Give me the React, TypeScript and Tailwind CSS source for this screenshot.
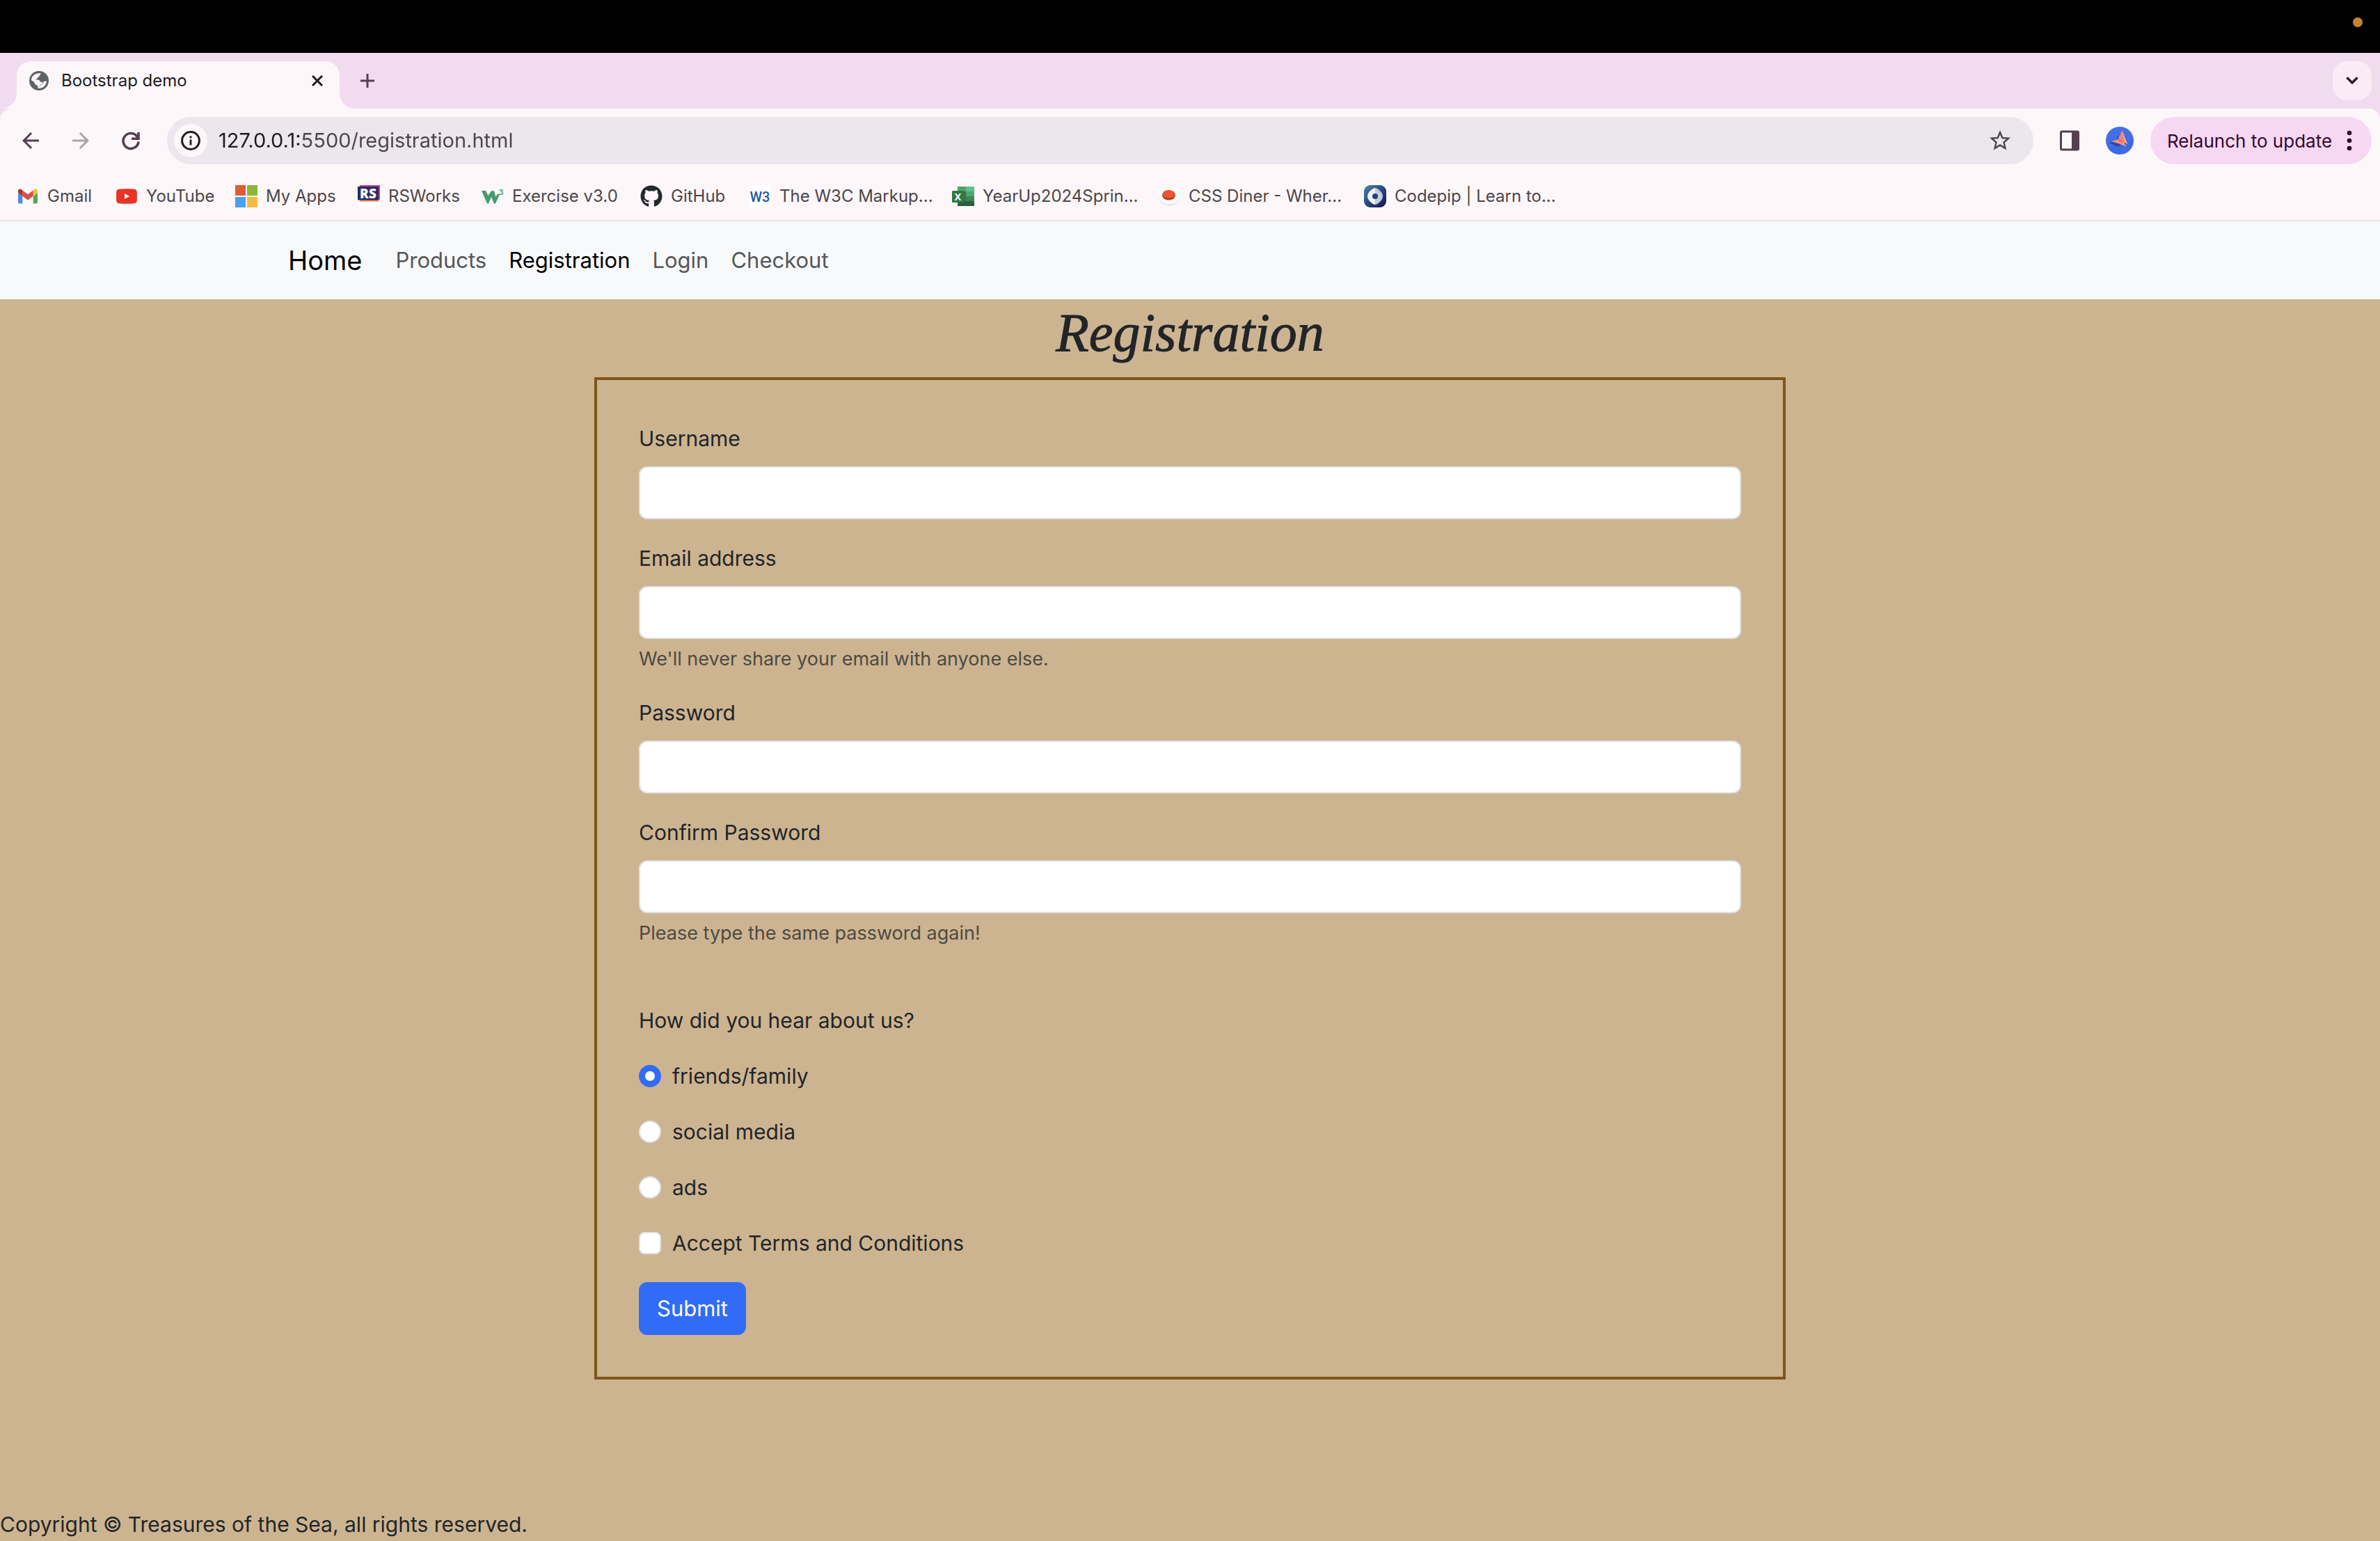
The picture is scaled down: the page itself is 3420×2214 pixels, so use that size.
import type { ReactNode } from "react";
import { FaGithub } from "react-icons/fa";
import { MdArrowBack, MdArrowForward, MdStarOutline } from "react-icons/md";

function GlobeIcon() {
  return (
    <svg viewBox="0 0 84 84" className="size-7 shrink-0" aria-hidden="true">
      <circle cx="42" cy="42" r="42" fill="#5f6368" />
      <path d="M9 40C9 23 24 9 46 9.5C48 9.5 50 11 50 13C49 17 43 17 43 22C43 28 36 26 35 31C35 36 30 35 28 38H40C46 39 46 46 50 47C57 47 58 50 57 54C56 58 46 57 46 63V74C43 75 38 74 37 73V66C37 60 26 62 24 54C22 45 14 44 9 40Z" fill="#fdf7fa" />
      <path d="M46 74.5C62 73 75 59 74.5 42C70 46 66 43 62 46C58 50 60 54 57 56C54 60 46 58 46 65Z" fill="#fdf7fa" />
    </svg>
  );
}

function ReloadIcon() {
  return (
    <svg viewBox="0 0 36 36" className="size-9" fill="none" stroke="#54404f" strokeWidth="3.6" aria-hidden="true">
      <path d="M29 19.5A11 11 0 1 1 26.5 11.5L28.5 14.5" />
      <path d="M29 6V15.2H19" />
    </svg>
  );
}

function InfoIcon() {
  return (
    <svg viewBox="0 0 28 28" className="size-7" fill="none" stroke="#1f1a1e" aria-hidden="true">
      <circle cx="14" cy="14" r="12.4" strokeWidth="3" />
      <path d="M14 12.6V20.5M14 7.6V10.4" strokeWidth="2.8" />
    </svg>
  );
}

function SidePanelIcon() {
  return (
    <svg viewBox="0 0 28 30" className="h-[30px] w-7" aria-hidden="true">
      <rect x="1.5" y="2" width="25" height="26" rx="1.5" fill="#fdf7fa" stroke="#54404f" strokeWidth="3" />
      <rect x="17" y="1" width="10" height="28" fill="#54404f" />
    </svg>
  );
}

function AvatarIcon() {
  return (
    <svg viewBox="0 0 120 120" className="size-10" aria-hidden="true">
      <circle cx="60" cy="60" r="60" fill="#4170e6" />
      <path d="M10 92L118 50A60 60 0 0 1 20 104Z" fill="#3d6ae2" />
      <path d="M14 70L48 58L52 36L66 92L72 104L60 80L54 88Z" fill="#2f4aa8" />
      <path d="M70 16L52 58L78 72L88 62Z" fill="#f08478" />
      <path d="M70 16L88 60L95 76L80 66Z" fill="#f7a193" />
      <path d="M24 64L56 54L80 70L88 86L60 74Z" fill="#f59084" />
      <path d="M52 58L62 54L72 68Z" fill="#e0604f" />
    </svg>
  );
}

function GmailIcon() {
  return (
    <svg viewBox="52 42 88 66" className="h-[22px] w-7" aria-hidden="true">
      <path fill="#5487f0" d="M58 108h14V74L52 59v43c0 3.3 2.7 6 6 6" />
      <path fill="#5aa85c" d="M120 108h14c3.3 0 6-2.7 6-6V59l-20 15" />
      <path fill="#f4bf42" d="M120 48v26l20-15v-8c0-7.4-8.5-11.6-14.4-7.2" />
      <path fill="#d9503f" d="M72 74V48l24 18 24-18v26L96 92" />
      <path fill="#b5312a" d="M52 51v8l20 15V48l-5.6-4.2c-5.9-4.4-14.4-.2-14.4 7.2" />
    </svg>
  );
}

function YouTubeIcon() {
  return (
    <svg viewBox="0 0 30 22" className="h-[22px] w-[30px]" aria-hidden="true">
      <path d="M4 .8C10 0 20 0 26 .8C28.4 1.1 29.6 2.4 29.8 5C30 9 30 13 29.8 17C29.6 19.6 28.4 20.9 26 21.2C20 22 10 22 4 21.2C1.6 20.9 .4 19.6 .2 17C0 13 0 9 .2 5C.4 2.4 1.6 1.1 4 .8Z" fill="#e93323" />
      <path d="M12 7V15L19 11Z" fill="#fff" />
    </svg>
  );
}

function WindowsIcon() {
  return (
    <svg viewBox="0 0 32 32" className="size-8" aria-hidden="true">
      <path fill="#dd5d35" d="M0 0h15v15H0z" />
      <path fill="#8bb736" d="M17 0h15v15H17z" />
      <path fill="#4ba1ea" d="M0 17h15v15H0z" />
      <path fill="#f5bb42" d="M17 17h15v15H17z" />
    </svg>
  );
}

function RSIcon() {
  return (
    <svg viewBox="0 0 32 32" className="size-8" aria-hidden="true">
      <path fill="#fff" d="M0 20h32v12H0z" />
      <path fill="#c4419a" d="M3 0h29v21H3z" />
      <path fill="#ee8b45" d="M3 12h27v11.5H3z" />
      <path fill="#292b5c" d="M0 2h30v19.5H0z" />
      <text x="15" y="18.5" textAnchor="middle" fontFamily="Open Sans" fontWeight="800" fontSize="19" fill="#fff">RS</text>
    </svg>
  );
}

function W3SchoolsIcon() {
  return (
    <svg viewBox="0 0 32 32" className="size-8" aria-hidden="true">
      <path d="M0 8H6L9.5 15L14 8.2H18L20.5 17L22.5 13H26L20 26.5H18L14 17L10 26.5H8Z" fill="#459b6c" />
      <text x="24.5" y="14" fontFamily="Inter" fontWeight="600" fontSize="11" fill="#459b6c">3</text>
    </svg>
  );
}

function W3CIcon() {
  return (
    <svg viewBox="0 0 32 32" className="size-8" aria-hidden="true">
      <rect width="32" height="32" rx="3" fill="#fff" />
      <text x="16" y="23.5" textAnchor="middle" fontFamily="Roboto" fontWeight="500" fontSize="20" fill="#245a9c">W3</text>
    </svg>
  );
}

function ExcelIcon() {
  return (
    <svg viewBox="0 0 32 32" className="size-8" aria-hidden="true">
      <path fill="#4ea36c" d="M8 2h12v9H8z" />
      <path fill="#62c18a" d="M20 2h12v14H20z" />
      <path fill="#4fa56f" d="M20 9h12v7H20z" />
      <path fill="#35724a" d="M8 9h12v14H8z" />
      <path fill="#3f8556" d="M20 16h12v7H20z" />
      <path fill="#2d5e3c" d="M8 23h24v7H8z" />
      <rect y="8" width="17" height="17" rx="1.5" fill="#2f7a45" />
      <text x="8.5" y="21.5" textAnchor="middle" fontFamily="Open Sans" fontWeight="700" fontSize="14" fill="#fff">X</text>
    </svg>
  );
}

function DinerIcon() {
  return (
    <svg viewBox="0 0 32 32" className="size-8" aria-hidden="true">
      <ellipse cx="16" cy="17" rx="14.5" ry="12" fill="#cfc9cb" />
      <ellipse cx="16" cy="16" rx="14.5" ry="12" fill="#fff" />
      <ellipse cx="15.5" cy="14.5" rx="9.5" ry="7" fill="#b83a1d" />
      <ellipse cx="15.5" cy="12.8" rx="9" ry="5.8" fill="#ea5431" />
    </svg>
  );
}

function CodepipIcon() {
  return (
    <svg viewBox="0 0 32 32" className="size-8" aria-hidden="true">
      <defs>
        <linearGradient id="codepip" x1="0" y1="0" x2="1" y2="1">
          <stop offset="0" stopColor="#4a86ad" />
          <stop offset=".5" stopColor="#274a80" />
          <stop offset="1" stopColor="#1b0f4a" />
        </linearGradient>
      </defs>
      <rect width="32" height="32" rx="9" fill="url(#codepip)" />
      <path d="M16 4C19 4 27 10 27 16C27 22 19 28 16 28Z" fill="#c5cbd9" />
      <path d="M16 4C13 4 5 10 5 16C5 22 13 28 16 28Z" fill="#eef0f5" />
      <circle cx="16" cy="16" r="4" fill="#23407a" />
    </svg>
  );
}

const bookmarks: { label: string; icon: ReactNode; width: string }[] = [
  { label: "Gmail", icon: <GmailIcon />, width: "w-[142px]" },
  { label: "YouTube", icon: <YouTubeIcon />, width: "w-[172px]" },
  { label: "My Apps", icon: <WindowsIcon />, width: "w-[176px]" },
  { label: "RSWorks", icon: <RSIcon />, width: "w-[178px]" },
  { label: "Exercise v3.0", icon: <W3SchoolsIcon />, width: "w-[228px]" },
  { label: "GitHub", icon: <FaGithub className="size-8 text-[#24292e]" />, width: "w-[156px]" },
  { label: "The W3C Markup...", icon: <W3CIcon />, width: "w-[292px]" },
  { label: "YearUp2024Sprin...", icon: <ExcelIcon />, width: "w-[296px]" },
  { label: "CSS Diner - Wher...", icon: <DinerIcon />, width: "w-[296px]" },
  { label: "Codepip | Learn to...", icon: <CodepipIcon />, width: "w-[296px]" },
];

function TabStrip() {
  return (
    <div className="flex h-20 items-end justify-between bg-[#f1dbee] pr-3 pl-6">
      <div className="flex items-center">
        <div className="relative flex h-[68px] w-[464px] items-start rounded-t-[20px] bg-[#fdf7fa] px-[18px] pt-3">
          <svg viewBox="0 0 22 22" className="absolute bottom-0 -left-[22px] size-[22px]" aria-hidden="true">
            <path d="M22 0V22H0A22 22 0 0 0 22 0Z" fill="#fdf7fa" />
          </svg>
          <svg viewBox="0 0 22 22" className="absolute -right-[22px] bottom-0 size-[22px]" aria-hidden="true">
            <path d="M0 0V22H22A22 22 0 0 1 0 0Z" fill="#fdf7fa" />
          </svg>
          <div className="flex h-8 flex-1 items-center">
            <GlobeIcon />
            <span className="flex-1 pl-[18px] text-2xl text-[#1f1a1e]">Bootstrap demo</span>
            <button type="button" aria-label="Close tab" className="flex size-7 items-center justify-center">
              <svg viewBox="0 0 16 16" className="size-4" stroke="#1f1a1e" strokeWidth="3" aria-hidden="true">
                <path d="M1 1L15 15M15 1L1 15" />
              </svg>
            </button>
          </div>
        </div>
        <button type="button" aria-label="New tab" className="mb-3 ml-6 flex size-8 items-center justify-center">
          <svg viewBox="0 0 20 20" className="size-5" stroke="#54404f" strokeWidth="3" aria-hidden="true">
            <path d="M10 0V20M0 10H20" />
          </svg>
        </button>
      </div>
      <button
        type="button"
        aria-label="Search tabs"
        className="mb-3 flex size-14 items-center justify-center rounded-[20px] bg-[#fbebf7]"
      >
        <svg viewBox="0 0 18 12" className="h-3 w-[18px]" fill="none" stroke="#1f1a1e" strokeWidth="3.2" aria-hidden="true">
          <path d="M1.5 1.5L9 9L16.5 1.5" />
        </svg>
      </button>
    </div>
  );
}

function Toolbar() {
  return (
    <div className="flex h-[92px] items-center pr-3 pl-[26px]">
      <div className="flex w-[214px] items-center gap-9">
        <button type="button" aria-label="Back">
          <MdArrowBack className="size-9 text-[#54404f]" />
        </button>
        <button type="button" aria-label="Forward">
          <MdArrowForward className="size-9 text-[#aca3a9]" />
        </button>
        <button type="button" aria-label="Reload">
          <ReloadIcon />
        </button>
      </div>
      <div className="flex h-[68px] flex-1 items-center rounded-full bg-[#ece6ed] pr-[30px] pl-[10px]">
        <button
          type="button"
          aria-label="Site information"
          className="flex size-12 items-center justify-center rounded-full bg-[#fdf7fa]"
        >
          <InfoIcon />
        </button>
        <input
          aria-label="Address"
          defaultValue="127.0.0.1:5500/registration.html"
          className="ml-4 flex-1 bg-[linear-gradient(to_right,#1f1a1e_118px,#4c444b_118px)] bg-clip-text text-[29px] text-transparent outline-none"
        />
        <button type="button" aria-label="Bookmark this tab">
          <MdStarOutline className="size-9 text-[#4c444b]" />
        </button>
      </div>
      <button type="button" aria-label="Side panel" className="ml-[38px]">
        <SidePanelIcon />
      </button>
      <button type="button" aria-label="Profile" className="ml-[38px]">
        <AvatarIcon />
      </button>
      <button
        type="button"
        className="ml-6 flex h-[68px] w-[318px] items-center justify-between rounded-full bg-[#f7d8f3] pr-7 pl-6 text-[26px] text-[#33092f]"
      >
        Relaunch to update
        <svg viewBox="0 0 8 30" className="h-[30px] w-2" fill="#33092f" aria-hidden="true">
          <circle cx="4" cy="4" r="3.3" />
          <circle cx="4" cy="15" r="3.3" />
          <circle cx="4" cy="26" r="3.3" />
        </svg>
      </button>
    </div>
  );
}

function BookmarksBar() {
  return (
    <nav aria-label="Bookmarks" className="flex h-[70px] items-center overflow-hidden border-b-2 border-[#e9dfe6] px-6">
      {bookmarks.map((b) => (
        <a key={b.label} href="#" className={`flex shrink-0 items-center gap-3 whitespace-nowrap ${b.width}`}>
          <span className="flex size-8 shrink-0 items-center justify-center">{b.icon}</span>
          <span className="text-2xl text-[#4c4549]">{b.label}</span>
        </a>
      ))}
    </nav>
  );
}

function SiteNav() {
  return (
    <nav aria-label="Main" className="bg-[#f8f9fb]">
      <div className="mx-auto flex h-28 max-w-[2640px] items-center px-6">
        <a href="#" className="mr-8 text-[38px] text-black">
          Home
        </a>
        <ul className="flex text-[31px] text-[#565758]">
          <li>
            <a href="#" className="px-4">Products</a>
          </li>
          <li>
            <a href="#" aria-current="page" className="px-4 text-black">Registration</a>
          </li>
          <li>
            <a href="#" className="px-4">Login</a>
          </li>
          <li>
            <a href="#" className="px-4">Checkout</a>
          </li>
        </ul>
      </div>
    </nav>
  );
}

function Field({ id, label, type, help }: { id: string; label: string; type: string; help?: string }) {
  return (
    <div className="mb-8">
      <label htmlFor={id} className="mb-4 block">
        {label}
      </label>
      <input
        id={id}
        type={type}
        aria-describedby={help ? `${id}-help` : undefined}
        className="block h-[76px] w-full rounded-xl border-2 border-[#dee2e6] bg-white px-6"
      />
      {help && (
        <p id={`${id}-help`} className="mt-2 text-[27px] leading-[42px] text-[#4c4a43]">
          {help}
        </p>
      )}
    </div>
  );
}

function Radio({ id, label, checked }: { id: string; label: string; checked?: boolean }) {
  return (
    <div className="mb-8 flex items-center gap-4">
      <input
        id={id}
        type="radio"
        name="source"
        defaultChecked={checked}
        className="size-8 appearance-none rounded-full border-2 border-[#dee2e6] bg-white checked:border-[9px] checked:border-[#326cf6]"
      />
      <label htmlFor={id}>{label}</label>
    </div>
  );
}

export default function App() {
  return (
    <div className="flex min-h-screen flex-col bg-[#cdb490] font-['Inter',sans-serif]">
      <header>
        <div className="flex h-[76px] items-center justify-end bg-black pr-[25px] pb-3">
          <span className="size-[14px] rounded-full bg-[#c38330]" />
        </div>
        <TabStrip />
        <div className="bg-[#f1dbee]">
          <div className="rounded-t-[16px] bg-[#fdf7fa]">
            <Toolbar />
            <BookmarksBar />
          </div>
        </div>
      </header>
      <SiteNav />
      <main className="flex-1 text-[30px] leading-[48px] text-[#212529]">
        <h1 className="mb-4 text-center font-['Apple_Chancery','Liberation_Serif',serif] text-[78px] leading-[96px] italic [-webkit-text-stroke:1px]">
          Registration
        </h1>
        <form className="mx-auto w-[calc(50%+2px)] border-4 border-[#7d561b] p-[60px]">
          <Field id="username" label="Username" type="text" />
          <Field id="email" label="Email address" type="email" help="We'll never share your email with anyone else." />
          <Field id="password" label="Password" type="password" />
          <Field
            id="confirm"
            label="Confirm Password"
            type="password"
            help="Please type the same password again!"
          />
          <fieldset>
            <legend className="pt-12 pb-8">How did you hear about us?</legend>
            <Radio id="friends" label="friends/family" checked />
            <Radio id="social" label="social media" />
            <Radio id="ads" label="ads" />
          </fieldset>
          <div className="mb-8 flex items-center gap-4">
            <input
              id="terms"
              type="checkbox"
              className="size-8 appearance-none rounded-lg border-2 border-[#dee2e6] bg-white checked:bg-[#326cf6]"
            />
            <label htmlFor="terms">Accept Terms and Conditions</label>
          </div>
          <button type="submit" className="block h-[76px] rounded-xl bg-[#326cf6] px-[26px] text-[31px] text-white">
            Submit
          </button>
        </form>
      </main>
      <footer className="text-[30px] leading-[48px] text-[#212529]">
        Copyright © Treasures of the Sea, all rights reserved.
      </footer>
    </div>
  );
}
